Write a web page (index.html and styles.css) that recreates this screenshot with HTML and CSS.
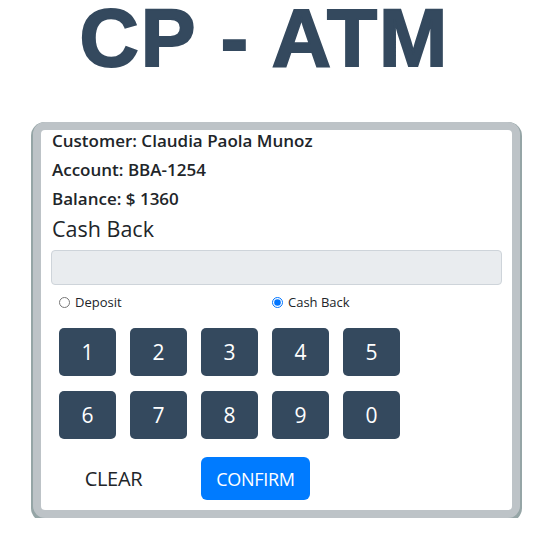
FILE: index.html
```html
<!DOCTYPE html>
<html>
<head>
<meta charset="utf-8">
<link rel="stylesheet" href="styles.css">
</head>
<body>
<h1 class="title">CP - ATM</h1>
<div class="card">
  <div class="info">Customer: Claudia Paola Munoz</div>
  <div class="info">Account: BBA-1254</div>
  <div class="info">Balance: $ 1360</div>
  <div class="mode">Cash Back</div>
  <input class="amount" type="text" disabled>
  <div class="radios">
    <label class="radio"><input type="radio" name="t"> Deposit</label>
    <label class="radio"><input type="radio" name="t" checked> Cash Back</label>
  </div>
  <div class="keypad">
    <button class="key">1</button>
    <button class="key">2</button>
    <button class="key">3</button>
    <button class="key">4</button>
    <button class="key">5</button>
    <button class="key">6</button>
    <button class="key">7</button>
    <button class="key">8</button>
    <button class="key">9</button>
    <button class="key">0</button>
  </div>
  <div class="actions">
    <button class="btn clear">CLEAR</button>
    <button class="btn confirm">CONFIRM</button>
  </div>
</div>
</body>
</html>
```
FILE: styles.css
```css
html, body {
  margin: 0;
  padding: 0;
  background: #fff;
}
body {
  font-family: "Open Sans", "Noto Sans", sans-serif;
  color: #212529;
}
.title {
  margin: 0;
  height: 122px;
  font-family: "Liberation Sans", Arial, sans-serif;
  font-weight: 700;
  font-size: 82px;
  line-height: 76px;
  letter-spacing: 2px;
  color: #34495e;
  -webkit-text-stroke: 2px #34495e;
  text-align: center;
  padding-right: 18px;
  box-sizing: border-box;
}
.card {
  margin-left: 33px;
  width: 487px;
  box-sizing: border-box;
  border: 8px solid #bdc3c7;
  border-radius: 12px;
  box-shadow: 0 2px 0 2px #95a5a6;
  padding: 0 10px 10px 10px;
  background: #fff;
}
.info {
  font-size: 17px;
  font-weight: 600;
  line-height: 22px;
  margin-bottom: 7px;
  padding-left: 1px;
}
.mode {
  font-size: 21.5px;
  font-weight: 500;
  line-height: 24px;
  margin-bottom: 9px;
  padding-left: 1px;
}
.amount {
  display: block;
  width: 100%;
  height: 35px;
  margin: 0;
  box-sizing: border-box;
  background: #e9ecef;
  border: 1px solid #ced4da;
  border-radius: 4px;
}
.radios {
  display: flex;
  height: 34px;
  align-items: center;
  font-size: 13px;
}
.radio {
  display: flex;
  align-items: center;
  gap: 5px;
  padding-left: 8px;
  width: 205px;
}
.radio input {
  margin: 0;
  width: 11px;
  height: 11px;
}
.keypad {
  display: grid;
  grid-template-columns: repeat(5, 57px);
  column-gap: 14px;
  row-gap: 15px;
  padding-left: 8px;
  margin-top: 9px;
}
.key {
  height: 48px;
  border: none;
  border-radius: 5px;
  background: #34495e;
  color: #fff;
  font-family: "Open Sans", "Noto Sans", sans-serif;
  font-size: 21px;
  padding: 0;
}
.actions {
  display: flex;
  gap: 33px;
  padding-left: 8px;
  margin-top: 18px;
}
.btn {
  width: 109px;
  height: 43px;
  border: none;
  border-radius: 6px;
  font-family: "Open Sans", "Noto Sans", sans-serif;
  padding: 0;
}
.clear {
  background: transparent;
  color: #212529;
  font-size: 20px;
  letter-spacing: -0.3px;
}
.confirm {
  background: #007bff;
  color: #fff;
  font-size: 18px;
  letter-spacing: -0.3px;
}
```
